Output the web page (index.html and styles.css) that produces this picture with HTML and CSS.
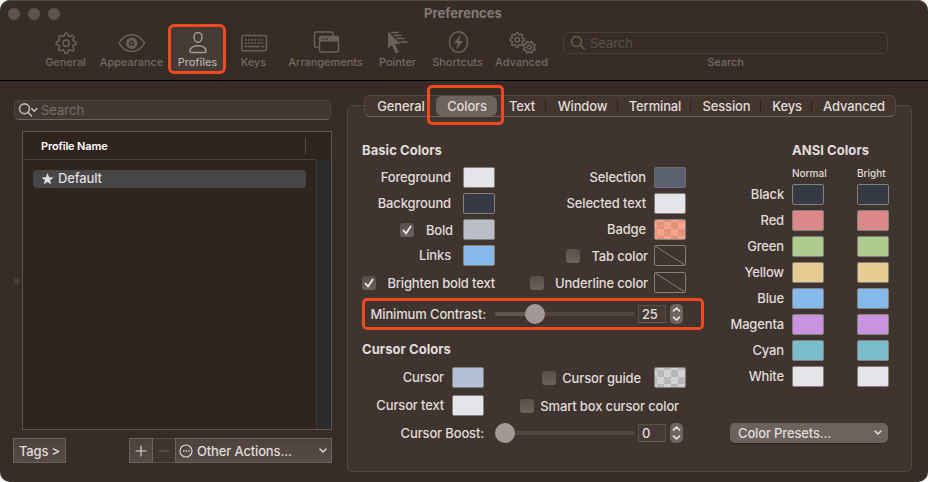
FILE: index.html
```html
<!DOCTYPE html>
<html lang="en">
<head>
<meta charset="utf-8">
<title>Preferences</title>
<link rel="stylesheet" href="styles.css">
</head>
<body>
<svg class="defs" width="0" height="0" aria-hidden="true">
  <defs>
    <path id="tooth" d="M-2.91-7.02Q-2-7.5-1.8-8L-1.4-9.6Q-1.3-10-.9-10H.9Q1.3-10 1.4-9.6L1.8-8Q2-7.5 2.91-7.02" vector-effect="non-scaling-stroke"/>
    <g id="gear">
      <use href="#tooth"/><use href="#tooth" transform="rotate(45)"/><use href="#tooth" transform="rotate(90)"/><use href="#tooth" transform="rotate(135)"/>
      <use href="#tooth" transform="rotate(180)"/><use href="#tooth" transform="rotate(225)"/><use href="#tooth" transform="rotate(270)"/><use href="#tooth" transform="rotate(315)"/>
      <circle r="3.1" vector-effect="non-scaling-stroke"/>
    </g>
    <g id="steps"><path d="M3.5 6.8 6.5 4l3 2.8M3.5 13.2l3 2.8 3-2.8"/></g>
  </defs>
</svg>
<div class="window">
  <header class="header">
    <div class="titlebar">
      <div class="lights"><i></i><i></i><i></i></div>
      <h1>Preferences</h1>
    </div>
    <nav class="toolbar">
      <div class="tool t50"><svg viewBox="0 0 28 24"><g class="ln" transform="translate(14.2 12.2)"><use href="#gear" /></g></svg><span>General</span></div>
      <div class="tool t82"><svg viewBox="0 0 28 24"><path class="ln" d="M1 12.2C4 7 8.500 3.800 13.700 3.800S23.500 7 26.500 12.200C23.500 17.500 19 20.400 13.700 20.400S4 17.500 1 12.200Z"/><circle class="fl" cx="13.700" cy="12.200" r="5.700"/><circle class="hole" cx="13.700" cy="12.200" r="2.600"/><circle class="fl" cx="13.700" cy="12.200" r="1.200"/></svg><span>Appearance</span></div>
      <div class="tool t50 active"><svg viewBox="0 0 28 24"><ellipse class="ln" cx="14" cy="6.300" rx="4" ry="4.900"/><path class="ln" d="M6 20.500C6 16.800 9.200 14.700 14 14.700S22 16.800 22 20.500Q22 21.500 21 21.500H7Q6 21.500 6 20.500Z"/></svg><span>Profiles</span></div>
      <div class="tool t62"><svg viewBox="0 0 28 24"><rect class="ln" x="1.800" y="4.500" width="24.700" height="15.200" rx="2"/><path class="keys" d="M5 8.800h19M5 12.100h19"/><path class="ln" d="M5 15.600h2M9 15.600h10.500M22 15.600h2"/></svg><span>Keys</span></div>
      <div class="tool t82"><svg viewBox="0 0 28 24"><path class="ln" d="M6 16.500H4.500Q2.500 16.500 2.500 14.500V3Q2.500 1 4.500 1H19Q21 1 21 3V4.500"/><rect class="ln" x="7.500" y="5.500" width="19" height="15.500" rx="2"/><path class="fl" d="M8 6h18v4.500H8z"/><path class="dots" d="M9.500 8h7"/></svg><span>Arrangements</span></div>
      <div class="tool t62"><svg viewBox="0 0 28 24"><path class="fl" d="M4 .5V17.500L8 14 11.500 22.500 14.500 21.200 11 13H16Z"/><path class="ln" d="M7.500 1.500H14M10 4.500H17M12.500 7.500H20M15 11H23"/></svg><span>Pointer</span></div>
      <div class="tool t58"><svg viewBox="0 0 28 24"><ellipse class="ln" cx="14.500" cy="11" rx="9.100" ry="10.200"/><path class="fl" d="M16.700 3.800 9.800 12.200H13.800L12.200 18.600 19.200 9.900H15Z"/></svg><span>Shortcuts</span></div>
      <div class="tool t70"><svg viewBox="0 0 28 24"><g class="ln" transform="translate(9.200 8.800) scale(.72)"><use href="#gear"/></g><g class="ln" transform="translate(21.300 16.200) scale(.6) rotate(22)"><use href="#gear"/></g></svg><span>Advanced</span></div>
      <div class="toolsearch">
        <div class="searchbox"><svg width="16" height="16" viewBox="0 0 16 16"><circle class="ln2" cx="6.500" cy="6.500" r="5"/><path class="ln2" d="m10.200 10.200 4 4"/></svg><span>Search</span></div>
        <span class="caption">Search</span>
      </div>
    </nav>
  </header>

  <main class="main">
    <i class="splitdot"></i>
    <section class="side">
      <div class="filter"><svg width="20" height="16" viewBox="0 0 20 16"><circle cx="6.500" cy="6.800" r="4.900"/><path d="m10 10.300 3.500 3.700"/><path d="m13.800 6.600 2.500 2.600 2.500-2.600"/></svg><span>Search</span></div>
      <div class="table">
        <div class="thead"><span>Profile Name</span></div>
        <div class="tbody">
          <div class="rows"><div class="row"><svg width="13" height="12" viewBox="0 0 13 12"><path d="m6.500 0 1.600 4.200 4.500.2-3.500 2.800 1.200 4.400-3.800-2.500-3.800 2.500 1.200-4.400L.4 4.400l4.500-.2Z"/></svg><span>Default</span></div></div>
          <div class="scroll"></div>
        </div>
      </div>
      <div class="actions">
        <div class="btn tags"><span>Tags &gt;</span></div>
        <div class="btn add"><svg width="12" height="12" viewBox="0 0 12 12"><path d="M6 1v10M1 6h10"/></svg></div>
        <div class="btn remove"><svg width="12" height="12" viewBox="0 0 12 12"><path d="M1 6h10"/></svg></div>
        <div class="btn other"><svg width="14" height="14" viewBox="0 0 14 14"><circle cx="7" cy="7" r="6"/><path class="ell" d="M4 7h6.500"/></svg><span>Other Actions...</span><svg class="chev" width="8" height="6" viewBox="0 0 8 6"><path d="m1 1 3 3 3-3"/></svg></div>
      </div>
    </section>

    <section class="panel">
      <nav class="tabs">
        <div class="tab a"><span>General</span></div><div class="tab b on"><span>Colors</span></div><div class="tab c sep"><span>Text</span></div><div class="tab d sep"><span>Window</span></div><div class="tab e sep"><span>Terminal</span></div><div class="tab f sep"><span>Session</span></div><div class="tab g sep"><span>Keys</span></div><div class="tab h"><span>Advanced</span></div>
      </nav>
      <div class="content">
        <div class="settings">
          <h2>Basic Colors</h2>
          <div class="pair"><div class="cell"><span class="lbl">Foreground</span><i class="sw white"></i></div><div class="cell"><span class="lbl">Selection</span><i class="sw slate"></i></div></div>
          <div class="pair"><div class="cell"><span class="lbl">Background</span><i class="sw black"></i></div><div class="cell"><span class="lbl">Selected text</span><i class="sw white"></i></div></div>
          <div class="pair"><div class="cell near"><i class="cb bold"><svg viewBox="0 0 14 14"><path d="m3.500 7.500 2.500 3 4.700-7"/></svg></i><span class="lbl">Bold</span><i class="sw gray"></i></div><div class="cell"><span class="lbl">Badge</span><i class="sw badge"></i></div></div>
          <div class="pair"><div class="cell"><span class="lbl">Links</span><i class="sw blue"></i></div><div class="cell check"><i class="cb"></i><span class="lbl">Tab color</span><svg class="sw" viewBox="0 0 30 19"><path d="M0 0 30 19"/></svg></div></div>
          <div class="pair brighten"><div class="cell"><i class="cb"><svg viewBox="0 0 14 14"><path d="m3.500 7.500 2.500 3 4.700-7"/></svg></i><span class="lbl">Brighten bold text</span></div><div class="cell check"><i class="cb"></i><span class="lbl">Underline color</span><svg class="sw" viewBox="0 0 30 19"><path d="M0 0 30 19"/></svg></div></div>
          <div class="sliderrow marked"><span class="lbl">Minimum Contrast:</span><div class="slider contrast"><i></i></div><div class="num">25</div><svg class="stepper" viewBox="0 0 13 20"><use href="#steps"/></svg></div>
          <h2 class="second">Cursor Colors</h2>
          <div class="pair cur"><div class="cell"><span class="lbl">Cursor</span><i class="sw periwinkle"></i></div><div class="cell guide"><i class="cb"></i><span class="lbl">Cursor guide</span><i class="sw checker"></i></div></div>
          <div class="pair cur"><div class="cell"><span class="lbl">Cursor text</span><i class="sw white"></i></div><div class="cell smart"><i class="cb"></i><span class="lbl">Smart box cursor color</span></div></div>
          <div class="sliderrow boost"><span class="lbl">Cursor Boost:</span><div class="slider"><i></i></div><div class="num">0</div><svg class="stepper" viewBox="0 0 13 20"><use href="#steps"/></svg></div>
        </div>
        <div class="ansi">
          <h2>ANSI Colors</h2>
          <div class="cols"><span>Normal</span><span>Bright</span></div>
          <div class="arow"><span>Black</span><i class="sw black"></i><i class="sw black"></i></div>
          <div class="arow"><span>Red</span><i class="sw red"></i><i class="sw red"></i></div>
          <div class="arow"><span>Green</span><i class="sw green"></i><i class="sw green"></i></div>
          <div class="arow"><span>Yellow</span><i class="sw yellow"></i><i class="sw yellow"></i></div>
          <div class="arow"><span>Blue</span><i class="sw blue"></i><i class="sw blue"></i></div>
          <div class="arow"><span>Magenta</span><i class="sw magenta"></i><i class="sw magenta"></i></div>
          <div class="arow"><span>Cyan</span><i class="sw cyan"></i><i class="sw cyan"></i></div>
          <div class="arow"><span>White</span><i class="sw white"></i><i class="sw white"></i></div>
          <div class="presets"><span>Color Presets...</span><svg class="chev" width="8" height="6" viewBox="0 0 8 6"><path d="m1 1 3 3 3-3"/></svg></div>
        </div>
      </div>
    </section>
  </main>
</div>
</body>
</html>
```
FILE: styles.css
```css
* { box-sizing: border-box; }
body { margin: 0; background: #fff; font: 500 13px/16px Inter, sans-serif; letter-spacing: -.15px; color: #e0dcda; overflow: hidden; }
svg { display: block; flex: none; }
svg path, svg circle, svg ellipse, svg rect { stroke-linecap: round; stroke-linejoin: round; }
.defs { position: absolute; }
h1, h2 { margin: 0; font-size: 13px; line-height: 16px; font-weight: 700; letter-spacing: .05px; }
span { white-space: nowrap; }

.window { width: 928px; height: 482px; background: #382c28; border-radius: 10px; overflow: hidden; display: flex; flex-direction: column; box-shadow: inset 0 1px #554a46; }

/* Title bar and toolbar */
.header { height: 81px; border-bottom: 1px solid #000; color: #746965; }
.titlebar { height: 28px; display: grid; grid-template-columns: 200px 1fr 202px; }
.lights { display: flex; gap: 8px; padding: 8px 0 0 8px; }
.lights i { width: 12px; height: 12px; border-radius: 50%; background: #5e524c; }
h1 { text-align: center; padding-top: 5px; color: #837975; }
.toolbar { display: flex; padding-left: 40px; }
.tool { height: 44px; display: flex; flex-direction: column; align-items: center; font-size: 11px; line-height: 14px; font-weight: 500; letter-spacing: -.05px; position: relative; }
.tool svg { width: 28px; height: 24px; margin: 3px 0 0; position: relative; left: 1px; fill: none; color: #6b605c; overflow: visible; }
.t50 { width: 50px; } .t82 { width: 82px; } .t62 { width: 62px; } .t58 { width: 58px; } .t70 { width: 70px; }
.ln { fill: none; stroke: currentColor; stroke-width: 1.5; }
.fl { fill: currentColor; }
.hole { fill: #382c28; }
.keys { stroke: currentColor; stroke-width: 1.8; stroke-dasharray: 1.6 1.5; }
svg .keys, svg .dots { stroke-linecap: butt; }
.dots { stroke: #382c28; stroke-width: 1.5; stroke-dasharray: 1.5 1; }
.tool span { padding-left: 1px; }
.active { color: #b5adaa; }
.active svg { color: #a39b97; }
.active > * { z-index: 1; }
.active::before { content: ""; position: absolute; inset: -4px -4px -2px; border: 3px solid #ee4b23; border-radius: 6px; background: #463b36; }
.toolsearch { margin-left: 7px; width: 325px; padding-top: 4px; text-align: center; font-size: 11px; line-height: 14px; letter-spacing: -.05px; }
.searchbox { height: 22px; border: 1px solid #4a3e36; border-radius: 5px; display: flex; align-items: center; gap: 4px; padding-left: 6px; font-size: 13px; font-weight: 400; color: #5b504c; }
.ln2 { fill: none; stroke: #665b57; stroke-width: 1.5; }
.caption { display: block; margin-top: 1px; }

/* Profile list */
.main { flex: 1; display: flex; position: relative; }
.splitdot { position: absolute; left: 14px; top: 197px; width: 6px; height: 6px; border-radius: 50%; background: #4c403c; }
.side { width: 332px; padding: 19px 0 0 13px; }
.filter { width: 317px; height: 20px; margin-left: 1px; border: 1px solid #50453f; border-bottom-color: #706560; border-radius: 5px; background: #433733; display: flex; align-items: center; padding-left: 3px; gap: 3px; color: #776d69; font-weight: 400; letter-spacing: 0; }
.filter svg { fill: none; stroke: #bdb6b3; stroke-width: 1.6; }
.table { margin: 11px 0 0 9px; height: 299px; border: 1px solid #5f5651; background: #30241f; display: flex; flex-direction: column; }
.thead { height: 28px; display: flex; align-items: center; padding-left: 18px; font-size: 11px; font-weight: 600; color: #fff; margin-right: 15px; border-bottom: 1px solid #4a3f3a; }
.thead::after { content: ""; width: 1px; height: 16px; background: #564b46; margin-left: auto; margin-right: 10px; }
.tbody { flex: 1; display: flex; }
.rows { flex: 1; padding: 10px 10px 0 10px; }
.row { height: 18px; border-radius: 4px; background: #464646; display: flex; align-items: center; gap: 4px; padding-left: 8px; }
.row svg { fill: #ddd; }
.row span { padding-bottom: 2px; }
.scroll { width: 15px; background: #2a2a2a; border-left: 1px solid #413a37; }
.actions { display: flex; margin-top: 8px; }
.btn { height: 25px; border: 1px solid #6c625e; background: linear-gradient(#4c413c, #564b47); display: flex; align-items: center; justify-content: center; }
.btn svg { fill: none; stroke: #d8d3d0; stroke-width: 1.2; }
.tags { width: 53px; margin-right: 63px; }
.add { width: 24px; }
.remove { width: 22px; border-left: 0; border-right: 0; background: #3f342f; border-color: #554a46; }
.btn.remove svg { stroke: #6d625e; }
.other { width: 157px; justify-content: flex-start; padding: 0 4px 0 3px; gap: 4px; }
svg .ell { stroke-linecap: butt; stroke-width: 1.7; stroke-dasharray: 1.5 1; }
.chev { margin-left: auto; fill: none; stroke: #e0dcda; }
.btn .chev, .presets .chev { stroke-width: 1.6; }

/* Settings panel */
.panel { width: 565px; height: 367px; margin: 24px 0 0 15px; border: 1px solid #524742; border-radius: 5px; background: #3f342f; }
.tabs { width: 532px; height: 22px; margin: -11px 0 0 16px; border: 1px solid #554a45; border-bottom-color: #71665f; border-radius: 6px; background: #42362f; display: flex; position: relative; }
.tab { display: flex; justify-content: center; align-items: center; position: relative; }
.tab span { padding-left: 1px; }
.a { width: 71px; } .b { width: 61px; } .c { width: 49px; } .d { width: 72px; } .e { width: 73px; } .f { width: 70px; } .g { width: 51px; } .h { width: 83px; }
.on { background: #6d635f; border-radius: 6px; }
.on::after { content: ""; position: absolute; inset: -11px -7px -9px -9px; border: 3px solid #ee4b23; border-radius: 5px; }
.sep::after { content: ""; position: absolute; right: 0; top: 4px; height: 12px; width: 1px; background: #302521; }
.content { display: flex; }
.settings { width: 372px; padding: 25px 0 0 14px; }
.settings h2 { margin-bottom: 6px; }
.pair { height: 26px; display: grid; grid-template-columns: 133px 191px; align-items: center; }
.cell { display: flex; align-items: center; justify-content: flex-end; }
.cell > .sw { margin-left: 12px; }
.cell:nth-child(2) > .sw { margin-left: 8px; }
.near > .sw { margin-left: 10px; }
.cell.check > .sw { margin-left: 6px; }
.cb { flex: none; width: 14px; height: 14px; border-radius: 3px; background: linear-gradient(#594e49, #6c625e); margin-right: 11px; }
.cb, .cb + .lbl { margin-top: 2px; }
.cb svg { width: 14px; height: 14px; fill: none; stroke: #f1eeec; stroke-width: 1.8; }
.bold { margin-right: 12px; }
.brighten { height: 28px; margin-bottom: 2px; }
.sw { flex: none; width: 32px; height: 21px; border: 1px solid #86807d; border-radius: 2px; fill: none; stroke: #86807d; }
.white { background: #e4e5e9; } .black { background: #363a44; } .slate { background: #5b6170; border-color: #6e6f73; }
.gray { background: #babec9; } .blue { background: #85b9ec; } .red { background: #dc8889; } .green { background: #aecb90; }
.yellow { background: #e6cc92; } .magenta { background: #c894e0; } .cyan { background: #7abdcc; } .periwinkle { background: #b3bfd6; }
.badge { background: conic-gradient(#e5917a 25%, #f4a48c 0 50%, #e5917a 0 75%, #f4a48c 0) -5px 2px / 14px 14px; }
.checker { background: conic-gradient(#b6b7b9 25%, #d0d1d3 0 50%, #b6b7b9 0 75%, #d0d1d3 0) -5px 2px / 14px 14px; }
.sliderrow { height: 32px; display: flex; align-items: center; position: relative; width: 342px; }
.sliderrow .lbl { width: 124px; text-align: right; }
.slider { width: 140px; height: 4px; margin-left: 9px; border-radius: 2px; background: #52463f; display: flex; align-items: center; }
.slider i { width: 20px; height: 20px; border-radius: 50%; background: #a09996; flex: none; }
.contrast { background: linear-gradient(90deg, #62564f 40px, #52463f 40px); padding-left: 30px; }
.num { width: 28px; height: 18px; margin-left: 3px; border: 1px solid #5a4f4a; border-bottom-color: #6c615c; background: #453a35; padding-left: 3px; }
.stepper { width: 13px; height: 20px; margin-left: 4px; border-radius: 5px; background: linear-gradient(#6d635f 49%, #5c524d 50%, #6d635f 52%); fill: none; stroke: #e8e4e2; stroke-width: 1.7; }
.marked::before { content: ""; position: absolute; inset: 0 0 0 0; border: 3px solid #ee4b23; border-radius: 5px; }
.settings .second { margin: 11px 0 6px; }
.cur { height: 28px; grid-template-columns: 122px 202px; }
.cur:nth-of-type(n) .cell:first-child .sw { margin-left: 8px; }
.cur .cb { margin-right: 6px; }
.cur .guide > .sw { margin-left: 13px; }
.smart { padding-right: 7px; }
.boost { margin-top: -2px; }
.boost .lbl { padding-right: 2px; }

.ansi { width: 170px; padding: 25px 0 0; }
.ansi h2 { padding-left: 72px; }
.cols { display: grid; grid-template-columns: 65px 60px; padding-left: 72px; font-size: 10px; line-height: 14px; margin: 8px 0 1px; letter-spacing: 0; }
.arow { height: 26px; display: grid; grid-template-columns: 64px 32px 32px; column-gap: 8px; align-items: center; text-align: right; }
.arow .sw:last-child { margin-left: 25px; }
.presets { margin: 34px 0 0 10px; width: 158px; height: 20px; border-radius: 5px; background: #6c625e; display: flex; align-items: center; padding: 0 6px 0 8px; box-shadow: 0 1px 1px #2d221e; }
```
